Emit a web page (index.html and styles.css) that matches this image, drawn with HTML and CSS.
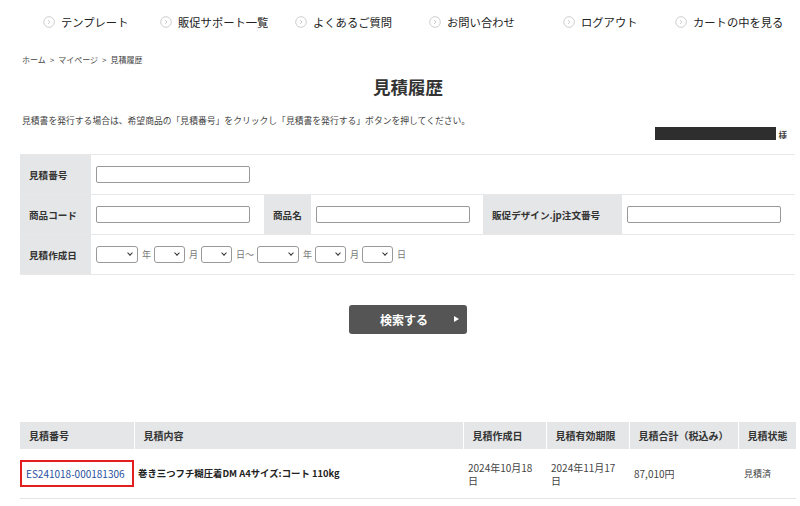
FILE: index.html
```html
<!DOCTYPE html>
<html lang="ja">
<head>
    <meta charset="UTF-8">
    <meta name="viewport" content="width=device-width, initial-scale=1.0">
    <title>見積履歴</title>
    <link rel="stylesheet" href="styles.css">
</head>
<body>
    <nav id="gnav">
        <a class="nav-item" href="#"><svg class="ico" viewBox="0 0 12 12"><circle cx="6" cy="6" r="5.3"/><path d="M5 4 L7 6 L5 8"/></svg>テンプレート</a>
        <a class="nav-item" href="#"><svg class="ico" viewBox="0 0 12 12"><circle cx="6" cy="6" r="5.3"/><path d="M5 4 L7 6 L5 8"/></svg>販促サポート一覧</a>
        <a class="nav-item" href="#"><svg class="ico" viewBox="0 0 12 12"><circle cx="6" cy="6" r="5.3"/><path d="M5 4 L7 6 L5 8"/></svg>よくあるご質問</a>
        <a class="nav-item" href="#"><svg class="ico" viewBox="0 0 12 12"><circle cx="6" cy="6" r="5.3"/><path d="M5 4 L7 6 L5 8"/></svg>お問い合わせ</a>
        <a class="nav-item" href="#"><svg class="ico" viewBox="0 0 12 12"><circle cx="6" cy="6" r="5.3"/><path d="M5 4 L7 6 L5 8"/></svg>ログアウト</a>
        <a class="nav-item" href="#"><svg class="ico" viewBox="0 0 12 12"><circle cx="6" cy="6" r="5.3"/><path d="M5 4 L7 6 L5 8"/></svg>カートの中を見る</a>
    </nav>

    <div id="main">
        <p class="breadcrumb">ホーム<span class="sep">&gt;</span>マイページ<span class="sep">&gt;</span>見積履歴</p>
        <h1>見積履歴</h1>
        <p class="lead">見積書を発行する場合は、希望商品の「見積番号」をクリックし「見積書を発行する」ボタンを押してください。</p>
        <div class="user"><span class="masked"></span>様</div>

        <table class="search">
            <colgroup>
                <col class="c-l1"><col class="c-f1"><col class="c-l2"><col class="c-f2"><col class="c-l3"><col>
            </colgroup>
            <tr>
                <th>見積番号</th>
                <td colspan="5"><input type="text"></td>
            </tr>
            <tr>
                <th>商品コード</th>
                <td><input type="text"></td>
                <th>商品名</th>
                <td><input type="text"></td>
                <th>販促デザイン.jp注文番号</th>
                <td><input type="text"></td>
            </tr>
            <tr>
                <th>見積作成日</th>
                <td colspan="5" class="dates">
                    <span class="sel wide"><select></select></span><span class="unit">年</span><span class="sel"><select></select></span><span class="unit">月</span><span class="sel"><select></select></span><span class="unit">日～</span><span class="sel wide"><select></select></span><span class="unit">年</span><span class="sel"><select></select></span><span class="unit">月</span><span class="sel"><select></select></span><span class="unit">日</span>
                </td>
            </tr>
        </table>

        <div class="btn-wrap">
            <button class="btn-search">検索する<span class="tri"></span></button>
        </div>

        <table class="result">
            <colgroup>
                <col class="r1"><col class="r2"><col class="r3"><col class="r4"><col class="r5"><col>
            </colgroup>
            <tr>
                <th>見積番号</th>
                <th>見積内容</th>
                <th>見積作成日</th>
                <th>見積有効期限</th>
                <th>見積合計（税込み）</th>
                <th>見積状態</th>
            </tr>
            <tr>
                <td class="no"><a href="#">ES241018-000181306</a></td>
                <td class="item">巻き三つフチ糊圧着DM A4サイズ:コート 110kg</td>
                <td class="date">2024年10月18日</td>
                <td class="date">2024年11月17日</td>
                <td>87,010円</td>
                <td class="state">見積済</td>
            </tr>
        </table>
    </div>
</body>
</html>
```

FILE: styles.css
```css
body {
    margin: 0;
    background: #fff;
    color: #333;
    font-family: "Noto Sans CJK JP", "Noto Sans", sans-serif;
}
#gnav {
    display: flex;
    align-items: center;
    height: 44px;
    padding-left: 43px;
}
.nav-item {
    display: flex;
    align-items: center;
    font-size: 11.3px;
    color: #222;
    text-decoration: none;
}
.nav-item:nth-child(1) { width: 117px; }
.nav-item:nth-child(2) { width: 135px; }
.nav-item:nth-child(3) { width: 134px; }
.nav-item:nth-child(4) { width: 134px; }
.nav-item:nth-child(5) { width: 112px; }
.ico {
    width: 12px;
    height: 12px;
    margin-right: 6px;
    fill: none;
    stroke: #c8c8c8;
    stroke-width: 0.9;
}
#main {
    padding: 0 4px 0 20px;
}
.breadcrumb {
    margin: 10px 0 0 2px;
    font-size: 8px;
    color: #444;
}
.sep {
    margin: 0 4px;
}
h1 {
    margin: 9px 0 0;
    text-align: center;
    font-size: 17.5px;
    color: #333;
}
.lead {
    margin: 15px 0 0 2px;
    font-size: 8.8px;
    color: #444;
}
.user {
    display: flex;
    justify-content: flex-end;
    align-items: center;
    padding-right: 9px;
    font-size: 8.5px;
    font-weight: bold;
    color: #444;
}
.masked {
    width: 121px;
    height: 13px;
    background: #2e2e2e;
    margin-right: 2px;
}
.search {
    width: 775px;
    margin-top: 14px;
    border-collapse: collapse;
}
.search tr {
    height: 40px;
    border-top: 1px solid #e8e8e8;
    border-bottom: 1px solid #e8e8e8;
}
.search th {
    background: #e4e6e7;
    text-align: left;
    padding: 0 0 0 9px;
    font-size: 9.6px;
    color: #333;
}
.search td {
    padding: 0 0 0 5px;
}
.c-l1 { width: 71px; }
.c-f1 { width: 173px; }
.c-l2 { width: 47px; }
.c-f2 { width: 172px; }
.c-l3 { width: 139px; }
input[type="text"] {
    display: block;
    width: 154px;
    height: 17px;
    box-sizing: border-box;
    border: 1px solid #999;
    border-radius: 2px;
    margin: 0;
}
.dates {
    font-size: 9px;
    color: #777;
}
.unit {
    display: inline-block;
    vertical-align: middle;
    margin: 0 3px 0 4px;
}
.sel {
    position: relative;
    display: inline-block;
    vertical-align: middle;
}
.sel select {
    appearance: none;
    display: block;
    width: 31px;
    height: 17px;
    border: 1px solid #999;
    border-radius: 3px;
    background: #fff;
    margin: 0;
}
.sel.wide select {
    width: 42px;
}
.sel::after {
    content: "";
    position: absolute;
    right: 6px;
    top: 5px;
    width: 3px;
    height: 3px;
    border-right: 1.5px solid #333;
    border-bottom: 1.5px solid #333;
    transform: rotate(45deg);
}
.btn-wrap {
    display: flex;
    justify-content: center;
    padding-top: 30px;
}
.btn-search {
    position: relative;
    width: 118px;
    height: 29px;
    border: none;
    border-radius: 3px;
    background: #555;
    color: #fff;
    font-family: inherit;
    font-size: 12px;
    font-weight: bold;
    padding: 0 8px 0 0;
}
.tri {
    position: absolute;
    right: 8px;
    top: 11px;
    border-left: 5px solid #fff;
    border-top: 3.5px solid transparent;
    border-bottom: 3.5px solid transparent;
}
.result {
    width: 776px;
    margin-top: 88px;
    border-collapse: collapse;
}
.result th {
    height: 27px;
    background: #e4e6e7;
    text-align: left;
    padding: 0 0 0 9px;
    font-size: 10px;
    color: #333;
    border-right: 1px solid #fff;
}
.result th:last-child {
    border-right: none;
}
.result td {
    height: 49px;
    padding: 0 0 0 5px;
    font-size: 10px;
    line-height: 13px;
    color: #444;
    border-bottom: 1px solid #e4e4e4;
}
.result td.date {
    padding-right: 9px;
}
.r1 { width: 113px; }
.r2 { width: 329px; }
.r3 { width: 83px; }
.r4 { width: 83px; }
.r5 { width: 109px; }
.result td.no {
    padding: 0;
}
.no a {
    display: block;
    width: 114px;
    height: 27px;
    box-sizing: border-box;
    border: 2px solid #e41e1e;
    line-height: 23px;
    padding-left: 4px;
    color: #1f4f9e;
    text-decoration: none;
    font-size: 10px;
}
.result td.item {
    padding-left: 4px;
    font-size: 9.4px;
    font-weight: bold;
    color: #222;
}
.result td.state {
    font-size: 9px;
    padding-left: 6px;
}
```
